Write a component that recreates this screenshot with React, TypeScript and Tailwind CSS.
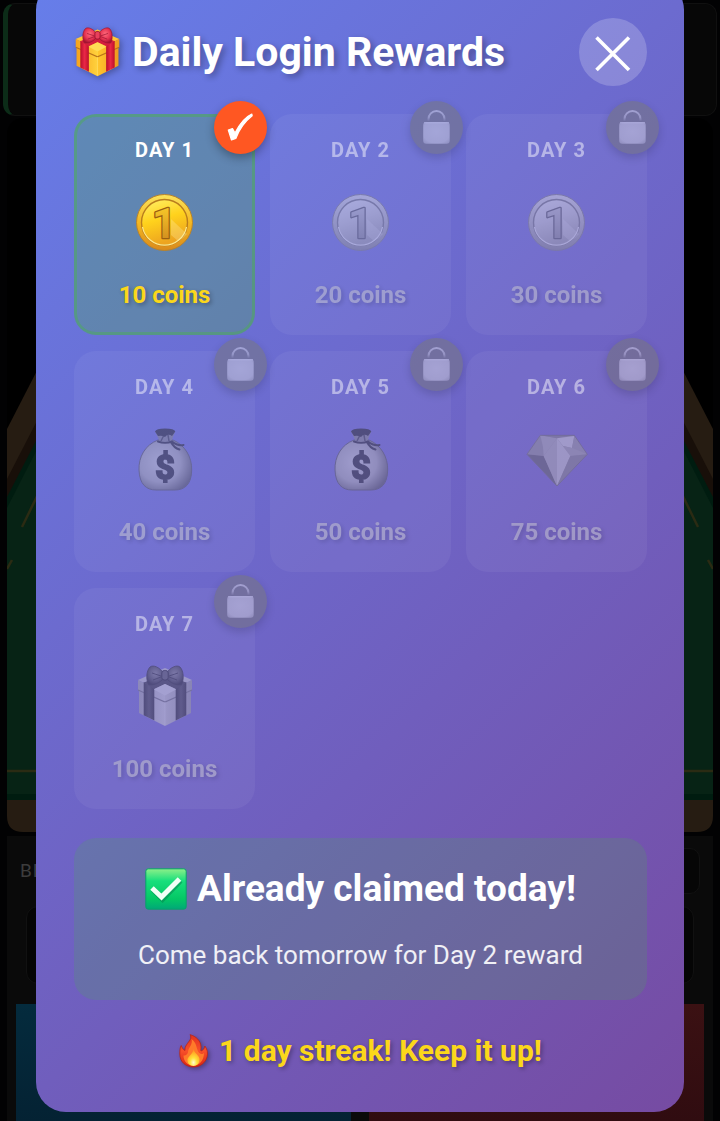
import React from "react";

type IconName = "coin" | "bag" | "gem" | "gift";

type Reward = { day: number; coins: number; icon: IconName; claimed: boolean };

const rewards: Reward[] = [
  { day: 1, coins: 10, icon: "coin", claimed: true },
  { day: 2, coins: 20, icon: "coin", claimed: false },
  { day: 3, coins: 30, icon: "coin", claimed: false },
  { day: 4, coins: 40, icon: "bag", claimed: false },
  { day: 5, coins: 50, icon: "bag", claimed: false },
  { day: 6, coins: 75, icon: "gem", claimed: false },
  { day: 7, coins: 100, icon: "gift", claimed: false },
];

function Gradients() {
  return (
    <svg width="0" height="0" className="absolute" aria-hidden="true">
      <defs>
        <linearGradient id="coinRim" x1="0" y1="0" x2="0" y2="1">
          <stop offset="0" stopColor="#fbe35c" />
          <stop offset="0.5" stopColor="#f5b820" />
          <stop offset="1" stopColor="#d98a1c" />
        </linearGradient>
        <linearGradient id="coinFace" x1="0" y1="0" x2="0.3" y2="1">
          <stop offset="0" stopColor="#fff06a" />
          <stop offset="0.5" stopColor="#ffd21c" />
          <stop offset="1" stopColor="#eda41f" />
        </linearGradient>
        <linearGradient id="coinDigit" x1="0" y1="0" x2="0" y2="1">
          <stop offset="0" stopColor="#ffd62b" />
          <stop offset="1" stopColor="#c9801c" />
        </linearGradient>
        <radialGradient id="bagBody" cx="0.4" cy="0.45" r="0.65">
          <stop offset="0" stopColor="#e4d2b0" />
          <stop offset="0.6" stopColor="#c4b292" />
          <stop offset="1" stopColor="#76664f" />
        </radialGradient>
        <linearGradient id="giftFront" x1="0" y1="0" x2="1" y2="0">
          <stop offset="0" stopColor="#f6a21c" />
          <stop offset="0.5" stopColor="#ffd23d" />
          <stop offset="0.51" stopColor="#ffc52d" />
          <stop offset="1" stopColor="#ee9a1f" />
        </linearGradient>
        <linearGradient id="giftRibbon" x1="0" y1="0" x2="1" y2="0">
          <stop offset="0" stopColor="#b80f2c" />
          <stop offset="0.5" stopColor="#ea2846" />
          <stop offset="1" stopColor="#bd102b" />
        </linearGradient>
        <radialGradient id="giftBow" cx="0.5" cy="0.4" r="0.6">
          <stop offset="0" stopColor="#ff6a7c" />
          <stop offset="0.6" stopColor="#e63452" />
          <stop offset="1" stopColor="#a51230" />
        </radialGradient>
        <linearGradient id="tickBox" x1="0" y1="0" x2="0" y2="1">
          <stop offset="0" stopColor="#8df089" />
          <stop offset="0.3" stopColor="#18df7c" />
          <stop offset="0.75" stopColor="#04c765" />
          <stop offset="1" stopColor="#00a878" />
        </linearGradient>
        <linearGradient id="flameOuter" x1="0" y1="0" x2="0" y2="1">
          <stop offset="0" stopColor="#e2301f" />
          <stop offset="0.5" stopColor="#f7502a" />
          <stop offset="1" stopColor="#d92314" />
        </linearGradient>
        <radialGradient id="flameInner" cx="0.5" cy="0.8" r="0.7">
          <stop offset="0" stopColor="#fffbd0" />
          <stop offset="0.4" stopColor="#ffe23b" />
          <stop offset="1" stopColor="#ff9a1f" />
        </radialGradient>
        <linearGradient id="lockShackle" x1="0" y1="0" x2="0" y2="1">
          <stop offset="0" stopColor="#dcd6ce" />
          <stop offset="0.6" stopColor="#c2bbb2" />
          <stop offset="1" stopColor="#6e6861" />
        </linearGradient>
        <radialGradient id="lockBody" cx="0.5" cy="0.45" r="0.75">
          <stop offset="0" stopColor="#e4dccf" />
          <stop offset="0.7" stopColor="#dbd2c8" />
          <stop offset="1" stopColor="#b0a79a" />
        </radialGradient>
      </defs>
    </svg>
  );
}

function Coin() {
  return (
    <svg viewBox="0 0 64 64" className="size-16" aria-hidden="true">
      <circle cx="31.500" cy="32.500" r="28" fill="url(#coinRim)" stroke="#b9832b" strokeWidth="1" />
      <circle cx="31.500" cy="32.500" r="23" fill="url(#coinFace)" stroke="#b97d1d" strokeWidth="1.400" />
      <path d="M9.500 37 A22.400 22.400 0 0 0 53.500 37" fill="none" stroke="#ffe98b" strokeWidth="1.300" />
      <path d="M38 29 L54 44 A24 24 0 0 1 45 51 L38 45Z" fill="#fff2a8" opacity="0.3" />
      <text x="31" y="48" textAnchor="middle" fontFamily="Roboto, sans-serif" fontWeight="700" fontSize="42" fill="url(#coinDigit)" stroke="#9a6012" strokeWidth="2.600" strokeLinejoin="round" paintOrder="stroke">1</text>
    </svg>
  );
}

function Bag() {
  return (
    <svg viewBox="0 0 64 64" className="size-16" aria-hidden="true">
      <path d="M25 13 C12 18 5.500 30 6 43 C6.500 57 13 63 23 63 H42 C52 63 58.500 57 58.700 43 C59 30 52 18 40 13Z" fill="url(#bagBody)" stroke="#6d6252" strokeWidth="1" />
      <path d="M22 4 L26.500 14 H38.500 L42.300 4Z" fill="#9d8d72" />
      <path d="M31 8 L28 14 M35 8 L36 14" stroke="#5a4d3b" strokeWidth="1.500" />
      <path d="M22 4.500 Q23 1.500 32 1.500 Q41.500 1.500 42.300 4.500 L39 9 Q35 6 32 10 Q29 8 25 9Z" fill="#3d3428" />
      <path d="M25 14.500 Q32 17 39 14.500 Q44 19 50.500 18 M38 15 Q41 21 46.500 22.500" fill="none" stroke="#3f372c" strokeWidth="2" strokeLinecap="round" />
      <text x="32" y="52" textAnchor="middle" fontFamily="Roboto, sans-serif" fontWeight="700" fontSize="34" fill="#3f3729" stroke="#3f3729" strokeWidth="2">$</text>
    </svg>
  );
}

function Gem() {
  return (
    <svg viewBox="0 0 64 64" className="size-16" aria-hidden="true">
      <path d="M15.300 8.300 H49.300 L62.300 27.300 L32 59 L2 27.300Z" fill="#9d9d9d" />
      <path d="M15.300 8.300 L32 11.300 L18.700 29 L2 27.300Z" fill="#b2b2b2" />
      <path d="M15.300 8.300 L18 20 L18.700 29 L2 27.300Z" fill="#9a9a9a" />
      <path d="M15.300 8.300 H49.300 L32 11.300Z" fill="#8b8b8b" />
      <path d="M32 11.300 L49.300 9 L47 21 L38 19Z" fill="#d2d2d2" />
      <path d="M49.300 9 L62.300 27.300 L45.300 29 L47 21Z" fill="#a0a0a0" />
      <path d="M38 19 L45.300 29 L62.300 27.300 L47 21Z" fill="#a9a9a9" />
      <path d="M2 27.300 L18.700 29 L32 59Z" fill="#6d6d6d" />
      <path d="M32 11.300 L18.700 29 L32 59Z" fill="#b4b4b4" />
      <path d="M32 11.300 L45.300 29 L32 59Z" fill="#cacaca" />
      <path d="M62.300 27.300 L45.300 29 L32 59Z" fill="#8e8e8e" />
      <path d="M15.300 8.300 H49.300 L62.300 27.300 L32 59 L2 27.300Z" fill="none" stroke="#707070" strokeWidth="0.800" strokeLinejoin="round" />
    </svg>
  );
}

function Gift({ className }: { className: string }) {
  return (
    <svg viewBox="4 1 56 62" className={className} aria-hidden="true">
      <path d="M6 24 L32 36 L58 24 V49 L32 62 L6 49Z" fill="url(#giftFront)" />
      <path d="M5 16 L32 4 L59 16 L32 30Z" fill="#ffc738" />
      <path d="M5 16 L32 29 L59 16 V26 L32 38 L5 26Z" fill="url(#giftFront)" />
      <path d="M5 26 L32 38 L59 26" fill="none" stroke="#b9741a" strokeWidth="1.300" />
      <path d="M32 38 V61" stroke="#ffdc66" strokeWidth="0.800" />
      <path d="M10.700 18 L21.300 24 V56.600 L10.700 51.300Z" fill="url(#giftRibbon)" />
      <path d="M42.700 24 L53.300 18 V51.300 L42.700 56.600Z" fill="url(#giftRibbon)" />
      <path d="M10.700 18.700 L32 9 L53.300 18.700 L43 25 L32 20 L21 25Z" fill="#d41f3d" />
      <path d="M32 20 L43 25.500 L32 31.500 L21 25.500Z" fill="#ffdc55" />
      <path d="M31 10 C27 3 20 0.500 17 3 C13 7 13 16 15.500 20.500 C20 22 27 19 31 14Z" fill="url(#giftBow)" stroke="#9c1632" strokeWidth="0.800" />
      <path d="M33 10 C37 3 44 0.500 47 3 C51 7 51 16 48.500 20.500 C44 22 37 19 33 14Z" fill="url(#giftBow)" stroke="#9c1632" strokeWidth="0.800" />
      <path d="M28 12 L19 9 M28 13 L20 16 M36 12 L45 9 M36 13 L44 16" stroke="#9c1632" strokeWidth="0.900" />
      <rect x="28.800" y="6.500" width="6.400" height="9.500" rx="2.500" fill="#e83f5b" stroke="#8e102a" strokeWidth="1" />
    </svg>
  );
}

function RewardIcon({ name }: { name: IconName }) {
  if (name === "coin") return <Coin />;
  if (name === "bag") return <Bag />;
  if (name === "gem") return <Gem />;
  return (
    <span className="flex size-16 items-center justify-center">
      <Gift className="h-[62px] w-14" />
    </span>
  );
}

function Badge({ claimed }: { claimed: boolean }) {
  return (
    <span className="absolute -top-4 -right-[15px] size-[53px] rounded-full bg-[#ff5722] shadow-[0_4px_10px_rgba(0,0,0,0.3)]">
      {claimed ? (
        <svg viewBox="0 0 53 53" role="img" aria-label="Claimed">
          <path d="M14.300 29 L18.500 27.500 L21 32 C25.500 23 31 16 37.800 13 L38.200 14.800 C31.500 20 25 29 21.800 37.500 L17.500 39Z" fill="#fff" stroke="#fff" strokeWidth="1.200" strokeLinejoin="round" />
        </svg>
      ) : (
        <svg viewBox="0 0 53 53" role="img" aria-label="Locked">
          <path d="M18.500 21 V18 A8 8 0 0 1 34.500 18 V21" fill="none" stroke="url(#lockShackle)" strokeWidth="2" />
          <rect x="13.200" y="21" width="26.500" height="21.800" rx="3" fill="url(#lockBody)" />
          <path d="M14 21.800 H39" stroke="#eee9e2" strokeWidth="1" />
        </svg>
      )}
    </span>
  );
}

function RewardCard({ day, coins, icon, claimed }: Reward) {
  const tone = claimed
    ? "border-[#4caf50]/45 bg-[#4caf50]/30"
    : "border-transparent bg-white/10 opacity-50 grayscale";
  return (
    <li className={`relative flex flex-col items-center rounded-[22px] border-3 pt-[21px] pb-[23px] ${tone}`}>
      <span className="text-[20px] leading-6 font-bold tracking-[1px]">DAY {day}</span>
      <span className="mt-7 mb-[27px]">
        <RewardIcon name={icon} />
      </span>
      <span className="text-[24px] leading-7 font-bold text-[#fbd71a] [text-shadow:2px_2px_4px_rgba(0,0,0,0.3)]">
        {coins} coins
      </span>
      <Badge claimed={claimed} />
    </li>
  );
}

function GameTable() {
  return (
    <svg viewBox="0 0 706 714" preserveAspectRatio="none" className="h-[714px] w-full" aria-hidden="true">
      <rect width="706" height="714" rx="16" fill="#000" />
      <path d="M0 311 L160 0 H546 L706 311 V698 Q706 714 690 714 H16 Q0 714 0 698Z" fill="#261c12" />
      <path d="M0 361 L186 0 H520 L706 361 V400 H0Z" fill="#180f09" />
      <path d="M0 379 L196 0 H510 L706 379 V682 H0Z" fill="#001c10" />
      <path d="M0 390 L200 0 H506 L706 390 V676 H0Z" fill="#072315" />
      <path d="M0 653 H706 M15 409 L215 0 M691 409 L491 0 M0 451 L5 442 M706 451 L701 442" fill="none" stroke="#2b2b13" strokeWidth="2.500" />
    </svg>
  );
}

function GameScreen() {
  return (
    <div className="flex flex-col bg-[#020203] px-[3px] pt-[3px]" aria-hidden="true">
      <div className="h-[113px] rounded-[12px] border border-l-5 border-[#101010] border-l-[#0c2c18] bg-[#070707]" />
      <div className="mt-[2px] px-1">
        <GameTable />
        <div className="mt-1 flex h-[285px] flex-col bg-[#0a0a0a] px-[9px] pt-3">
          <div className="flex items-center justify-between pr-1 pl-1">
            <span className="text-[19px] tracking-[1px] text-[#3c3c3c]">BET</span>
            <span className="h-[46px] w-40 rounded-[10px] border border-[#111] bg-[#060606]" />
          </div>
          <div className="mt-3 flex items-center justify-between px-[10px]">
            <span className="h-[78px] w-40 rounded-[12px] border border-[#111] bg-[#050505]" />
            <span className="h-[78px] w-40 rounded-[12px] border border-[#111] bg-[#050505]" />
          </div>
          <div className="mt-5 grid flex-1 grid-cols-2 gap-[18px]">
            <span className="bg-linear-to-b from-[#042b3d] to-[#042233]" />
            <span className="bg-linear-to-b from-[#3b1113] to-[#300c10]" />
          </div>
        </div>
      </div>
    </div>
  );
}

export default function App() {
  return (
    <div className="relative min-h-screen overflow-hidden bg-black font-[Roboto,sans-serif] text-white">
      <Gradients />
      <GameScreen />
      <section
        role="dialog"
        aria-labelledby="rewards-title"
        className="absolute inset-x-9 -top-5 rounded-[30px] bg-[linear-gradient(135deg,#667eea_0%,#764ba2_100%)] pt-[38px] pr-[37px] pb-[43px] pl-[38px]"
      >
        <header className="flex items-center justify-between">
          <h2 id="rewards-title" className="flex items-center gap-[11px] text-[41px] leading-[48px] font-bold [text-shadow:3px_3px_6px_rgba(0,0,0,0.3)]">
            <Gift className="h-[50px] w-[47px] drop-shadow-[2px_2px_3px_rgba(0,0,0,0.3)]" />
            Daily Login Rewards
          </h2>
          <button type="button" aria-label="Close" className="flex size-[68px] items-center justify-center rounded-full bg-white/20">
            <svg viewBox="0 0 68 68" className="size-[68px]" aria-hidden="true">
              <path d="M17.500 19.500 L50 52 M50 19.500 L17.500 52" stroke="#fff" strokeWidth="3.600" />
            </svg>
          </button>
        </header>

        <ul className="mt-7 grid grid-cols-3 gap-x-[15px] gap-y-4">
          {rewards.map((r) => (
            <RewardCard key={r.day} {...r} />
          ))}
        </ul>

        <div className="mt-[29px] flex flex-col items-center rounded-[22px] bg-[#4caf50]/20 pt-7 pb-[29px]">
          <h3 className="flex items-center gap-[10px] text-[37px] leading-[46px] font-bold">
            <svg viewBox="0 0 42 42" className="size-[42px]" aria-hidden="true">
              <rect x="0.800" y="0.800" width="40.400" height="40.400" rx="2.500" fill="url(#tickBox)" stroke="#0b9e6b" strokeWidth="1" />
              <path d="M8 21.500 L17.500 31 L35.500 12.500" fill="none" stroke="#067f4e" strokeOpacity="0.500" strokeWidth="5.500" />
              <path d="M7 20 L16.500 29 L34.500 11" fill="none" stroke="#f2fff6" strokeWidth="5" />
            </svg>
            Already claimed today!
          </h3>
          <p className="mt-[27px] text-[26px] leading-8 text-white/90">Come back tomorrow for Day 2 reward</p>
        </div>

        <p className="mt-[33px] flex items-center justify-center gap-[10px] text-[30px] leading-9 font-bold text-[#fbd71a] [text-shadow:2px_2px_4px_rgba(0,0,0,0.3)]">
          <svg viewBox="0 0 30 34" className="h-[34px] w-[30px] drop-shadow-[2px_2px_2px_rgba(0,0,0,0.3)]" aria-hidden="true">
            <path d="M11 0.700 C17 2 22 7 22 13 C22 15 21.500 16 22 17 C24 16.500 25.500 14.500 25.800 12 C28.500 15 29 19 28 23 C26.500 29 21 33 14.500 33 C7 33 0.800 28 0.800 20 C0.800 16 1 13.500 2.200 11.500 C3 13.500 4 15.500 6 16.500 C5.500 12 9 9 11 6 C12 4 12 2 11 0.700Z" fill="url(#flameOuter)" stroke="#b82415" strokeWidth="0.800" />
            <path d="M12.500 5 C18 9 17 14 19.500 18 C22 21 24 20 25 19 C25 27 20 31.500 14.500 31.500 C8.500 31.500 4.500 27.500 4.500 21.500 C6.500 22 8.500 20.500 9 18 C9.500 13 14 11 12.500 5Z" fill="#ff7a2a" />
            <path d="M14.500 15 C15 19 19.500 20.500 20.500 24.500 C21 29 18 32 14.500 32 C10.500 32 8 29 8.500 25 C9.500 22 14 20 14.500 15Z" fill="url(#flameInner)" />
          </svg>
          1 day streak! Keep it up!
        </p>
      </section>
    </div>
  );
}
